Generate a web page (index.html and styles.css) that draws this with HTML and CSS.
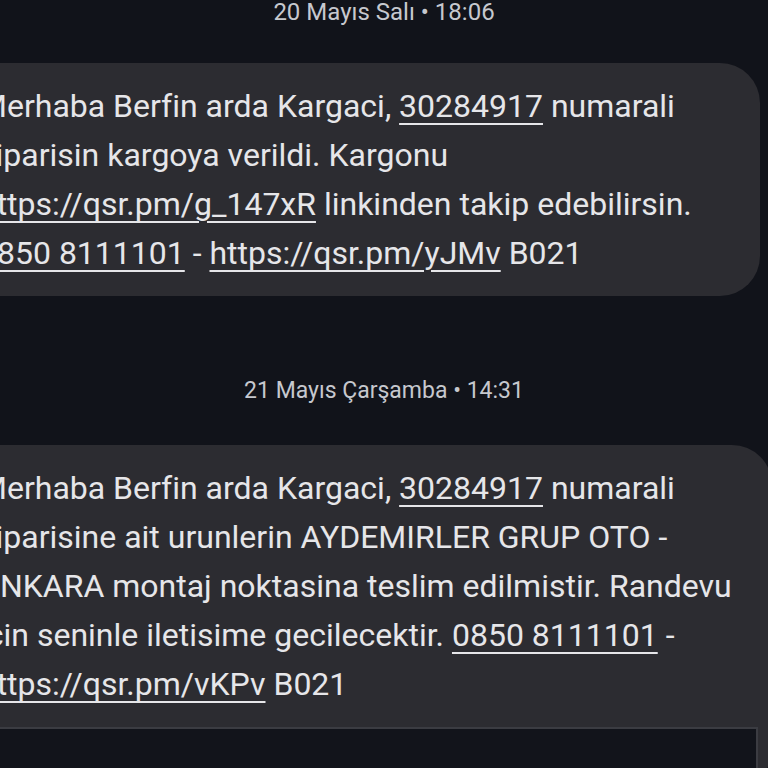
FILE: index.html
```html
<!DOCTYPE html>
<html lang="tr">
<head>
<meta charset="utf-8">
<title>Mesajlar</title>
<link rel="stylesheet" href="styles.css">
</head>
<body>
<div class="screen">
  <div class="date date-first">20 Mayıs Salı • 18:06</div>
  <div class="msg">
    <div class="bubble">
      <div class="line">Merhaba Berfin arda Kargaci, <span class="link">30284917</span> numarali</div>
      <div class="line">siparisin kargoya verildi. Kargonu</div>
      <div class="line"><span class="link">https://qsr.pm/g_147xR</span> linkinden takip edebilirsin.</div>
      <div class="line"><span class="link">0850 8111101</span> - <span class="link">https://qsr.pm/yJMv</span> B021</div>
    </div>
  </div>
  <div class="date">21 Mayıs Çarşamba • 14:31</div>
  <div class="msg msg-last">
    <div class="bubble bubble-cut">
      <div class="line">Merhaba Berfin arda Kargaci, <span class="link">30284917</span> numarali</div>
      <div class="line">siparisine ait urunlerin AYDEMIRLER GRUP OTO -</div>
      <div class="line">ANKARA montaj noktasina teslim edilmistir. Randevu</div>
      <div class="line">icin seninle iletisime gecilecektir. <span class="link">0850 8111101</span> -</div>
      <div class="line"><span class="link">https://qsr.pm/vKPv</span> B021</div>
    </div>
  </div>
  <div class="compose"></div>
</div>
</body>
</html>
```

FILE: styles.css
```css
html, body {
  margin: 0;
  padding: 0;
  background: #11131a;
  width: 768px;
  height: 768px;
  overflow: hidden;
}

.screen {
  position: relative;
  display: flex;
  flex-direction: column;
  width: 768px;
  height: 768px;
  padding-right: 8px;
  box-sizing: border-box;
  font-family: Roboto, "Noto Sans", sans-serif;
}

.date {
  flex: none;
  height: 28px;
  line-height: 28px;
  font-size: 23px;
  color: #c6c8ce;
  text-align: center;
  margin-top: 81px;
  padding-left: 8px;
}

.date-first {
  margin-top: -2px;
  font-size: 24px;
}

.msg {
  flex: none;
  display: flex;
  margin-top: 37px;
}

.msg-last {
  margin-top: 40px;
}

.bubble {
  flex: 1;
  margin-left: -60px;
  padding: 19px 40px 18px 39px;
  background: #2c2c31;
  border-radius: 40px;
  color: #e6e6e9;
  font-size: 32px;
  line-height: 49px;
  white-space: nowrap;
}

.bubble-cut {
  padding-bottom: 80px;
}

.link {
  text-decoration: underline;
  text-decoration-thickness: 2px;
  text-underline-offset: 6px;
}

.compose {
  position: absolute;
  left: 0;
  top: 727px;
  width: 756px;
  height: 60px;
  background: #12141b;
  border-top: 2px solid #3b3c42;
  border-right: 2px solid #3b3c42;
}
```
